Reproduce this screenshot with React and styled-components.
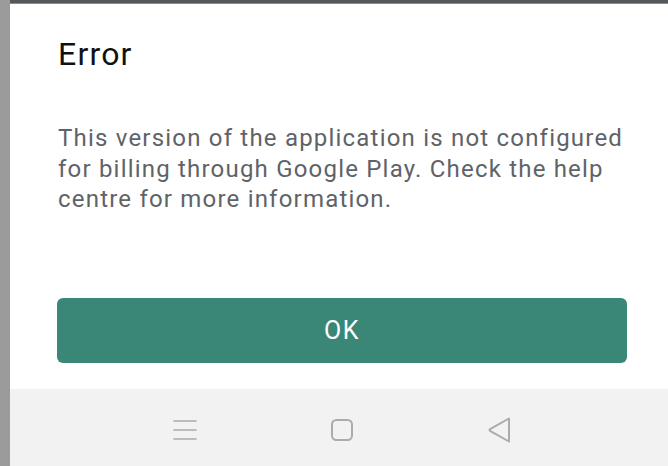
import styled, { createGlobalStyle } from 'styled-components';

const Global = createGlobalStyle`
  html, body {
    margin: 0;
    padding: 0;
    background: #ffffff;
  }
  body {
    font-family: Roboto, 'Noto Sans', sans-serif;
  }
`;

const Screen = styled.div`
  display: flex;
  width: 668px;
  height: 466px;
  overflow: hidden;
`;

const SideStrip = styled.div`
  width: 10px;
  flex-shrink: 0;
  background: #9b9b9b;
`;

const Main = styled.div`
  flex: 1;
  display: flex;
  flex-direction: column;
`;

const TopBar = styled.div`
  height: 4px;
  background: #55585b;
  border-bottom: 1px solid #8a8d90;
  box-sizing: border-box;
`;

const Dialog = styled.div`
  flex: 1;
  background: #ffffff;
  padding: 32px 41px 0 47px;
  box-sizing: border-box;
`;

const Title = styled.h2`
  margin: 0;
  font-family: Roboto, sans-serif;
  font-weight: 400;
  font-size: 32px;
  line-height: 36px;
  letter-spacing: 1.2px;
  color: #111111;
  padding-left: 1px;
`;

const Message = styled.p`
  margin: 51px 0 0;
  font-family: Roboto, sans-serif;
  font-size: 24px;
  line-height: 30.5px;
  color: #5f6368;
  padding-left: 1px;
  letter-spacing: 1.2px;
`;

const OkButton = styled.button`
  display: flex;
  align-items: center;
  justify-content: center;
  width: 100%;
  height: 65px;
  margin-top: 83px;
  border: none;
  border-radius: 6px;
  background: #3a8778;
  color: #ffffff;
  font-family: Roboto, sans-serif;
  font-weight: 400;
  font-size: 25px;
  letter-spacing: 1.5px;
  cursor: pointer;
`;

const NavBar = styled.div`
  height: 77px;
  flex-shrink: 0;
  background: #f2f2f2;
  display: flex;
  align-items: center;
  padding: 5px 0 0 163px;
  gap: 133px;
  box-sizing: border-box;
`;

const NavIcon = styled.svg`
  display: block;
  flex-shrink: 0;
`;

export default function App() {
  return (
    <>
      <Global />
      <Screen>
        <SideStrip />
        <Main>
          <TopBar />
          <Dialog>
            <Title>Error</Title>
            <Message>
              This version of the application is not configured for billing through Google Play. Check the help centre for more information.
            </Message>
            <OkButton>OK</OkButton>
          </Dialog>
          <NavBar>
            <NavIcon width="24" height="24" viewBox="0 0 24 24">
              <g stroke="#ababab" strokeWidth="1.6" strokeLinecap="round">
                <line x1="1" y1="3" x2="23" y2="3" />
                <line x1="1" y1="12" x2="23" y2="12" />
                <line x1="1" y1="21" x2="23" y2="21" />
              </g>
            </NavIcon>
            <NavIcon width="24" height="24" viewBox="0 0 24 24">
              <rect x="2" y="2" width="20" height="20" rx="4.5" fill="none" stroke="#ababab" strokeWidth="2" />
            </NavIcon>
            <NavIcon width="24" height="26" viewBox="0 0 24 26">
              <path d="M22 1.5 L3 12.2 Q2 13 3 13.8 L22 24.5 Z" fill="none" stroke="#ababab" strokeWidth="2" strokeLinejoin="round" />
            </NavIcon>
          </NavBar>
        </Main>
      </Screen>
    </>
  );
}
